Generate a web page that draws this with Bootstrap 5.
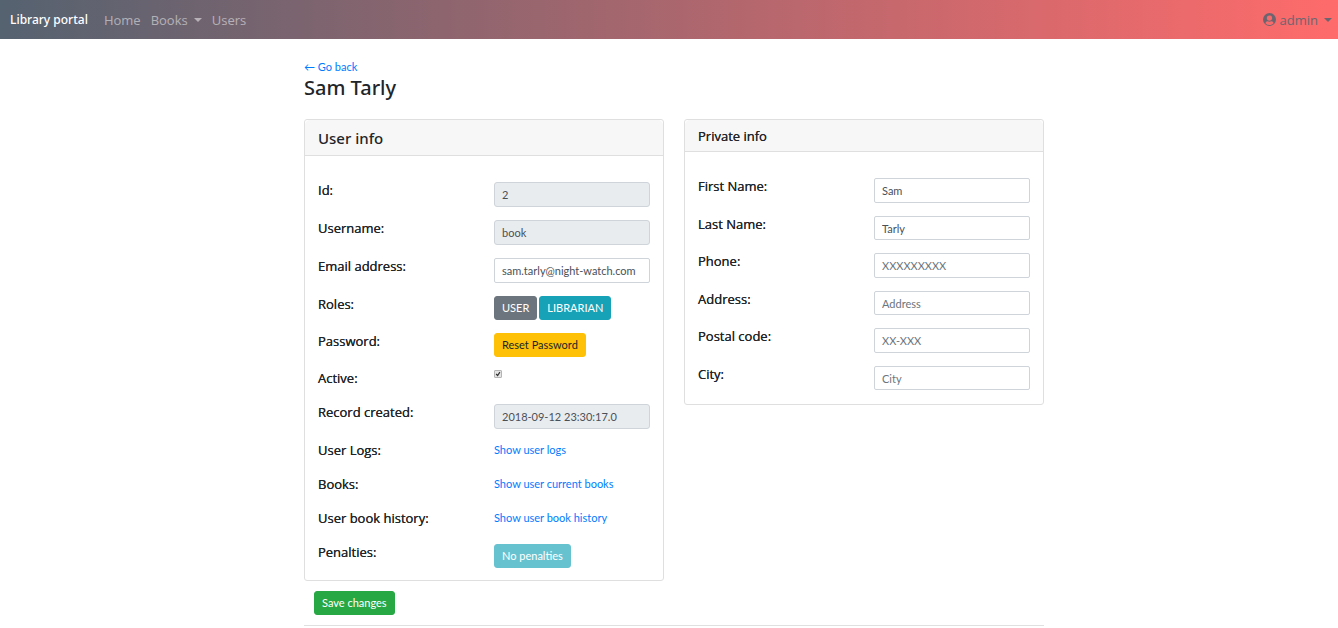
<!DOCTYPE html>
<html lang="en">
<head>
<meta charset="utf-8">
<meta name="viewport" content="width=device-width, initial-scale=1">
<title>Library portal</title>
<link rel="stylesheet" href="https://cdn.jsdelivr.net/npm/bootstrap@5.3.0/dist/css/bootstrap.min.css">
<style>
  body { font-family: "Open Sans", "Noto Sans", sans-serif; font-size: 13px; line-height: 18px; color: #212529; }
  a { color: #007bff; text-decoration: none; }
  .portal-bar { background: linear-gradient(90deg, #556270, #ff6b6b); padding: 0 1px 0 10px; min-height: 39px; --bs-navbar-nav-link-padding-x: 5px; }
  .portal-bar .navbar-brand { font-family: "Noto Sans", sans-serif; font-size: 12px; line-height: 18px; margin-right: 11px; font-weight: 500; color: #fff; }
  .portal-bar .nav-link { color: rgba(255,255,255,.5); padding-top: 10px; padding-bottom: 10px; }
  .portal-bar .account-link { color: #6c6570; }
  .portal-bar .dropdown-toggle::after { margin-left: 6px; vertical-align: 3px; border-top-width: 4px; border-left-width: 4px; border-right-width: 4px; }
  .account-icon { width: 13px; height: 13px; vertical-align: -1px; }
  .portal-main { max-width: 750px; margin: 0 auto; padding: 19px 0 0 10px; }
  .fine { font-family: Lato, sans-serif; font-size: 11px; }
  .page-title { font-family: "Noto Sans", sans-serif; font-size: 20px; line-height: 24px; font-weight: 500; margin-bottom: 19px; }
  .panels { --bs-gutter-x: 20px; }
  .panel { border-color: #dfdfdf; border-radius: 3px; }
  .panel .card-header { padding: 7px 13px 6px; background: #f7f7f7; border-color: #dfdfdf; font-size: 13px; text-shadow: 0 0 0 currentColor; }
  .panel .card-header.wide-head { font-family: "Noto Sans", sans-serif; font-size: 15px; line-height: 22px; font-weight: 500; text-shadow: none; }
  .panel .card-body { padding: 26px 13px 12px; }
  .fields { display: grid; gap: 13px; }
  .fields > .row { --bs-gutter-x: 20px; min-height: 21px; }
  .fields label, .fields .caption { font-size: 13px; line-height: 16px; text-shadow: 0 0 0 currentColor; }
  .fields a { display: block; line-height: 15px; }
  .roles { gap: 2px; }
  .form-control { font-family: Lato, sans-serif; font-size: 11px; line-height: 15px; padding: 4px 7px; height: 25px; min-height: 0; border-radius: 2px; border-color: #ced4da; color: #495057; }
  .form-control::placeholder { color: #6c757d; }
  .form-control:disabled { background: #e9ecef; border-radius: 3px; }
  .panel .private { padding-bottom: 14px; }
  .private > .row:nth-child(even) .form-control { height: 24px; }
  .btn { --bs-btn-font-family: Lato, sans-serif; --bs-btn-font-size: 11px; --bs-btn-line-height: 16px; --bs-btn-padding-y: 3px; --bs-btn-padding-x: 7px; --bs-btn-border-radius: 3px; display: block; }
  .btn-user { --bs-btn-color: #fff; --bs-btn-bg: #6c757d; --bs-btn-border-color: #6c757d; }
  .btn-teal { --bs-btn-color: #fff; --bs-btn-bg: #17a2b8; --bs-btn-border-color: #17a2b8; --bs-btn-disabled-color: #fff; --bs-btn-disabled-bg: #17a2b8; --bs-btn-disabled-border-color: #17a2b8; }
  .btn-amber { --bs-btn-color: #212529; --bs-btn-bg: #ffc107; --bs-btn-border-color: #ffc107; }
  .btn-save { --bs-btn-color: #fff; --bs-btn-bg: #28a745; --bs-btn-border-color: #28a745; margin: 10px 10px; }
  .active-box { display: block; width: 8px; height: 8px; margin: 0; appearance: none; border: 1px solid #b4b4b4; border-radius: 1px; background: #e4e4e4; }
  .active-box:checked { background: #e4e4e4 url("data:image/svg+xml,%3Csvg xmlns='http://www.w3.org/2000/svg' viewBox='0 0 8 8'%3E%3Cpath d='M1.5 4l2 2 3-4.500' fill='none' stroke='%23333' stroke-width='1.600'/%3E%3C/svg%3E") center / 100%; }
  .end-rule { margin: 0; border-color: #000; opacity: .12; }
</style>
</head>
<body>
<nav class="navbar navbar-expand portal-bar">
  <a class="navbar-brand p-0" href="#">Library portal</a>
  <ul class="navbar-nav me-auto">
    <li class="nav-item"><a class="nav-link" href="#">Home</a></li>
    <li class="nav-item dropdown"><a class="nav-link dropdown-toggle" href="#" role="button" data-bs-toggle="dropdown">Books</a></li>
    <li class="nav-item"><a class="nav-link" href="#">Users</a></li>
  </ul>
  <ul class="navbar-nav">
    <li class="nav-item dropdown"><a class="nav-link dropdown-toggle account-link" href="#" role="button" data-bs-toggle="dropdown"><svg class="account-icon" viewBox="0 0 16 16" aria-hidden="true"><path fill="currentColor" fill-rule="evenodd" d="M8 0a8 8 0 1 1 0 16A8 8 0 0 1 8 0ZM8 3a3.300 3.300 0 1 0 0 6.600A3.300 3.300 0 0 0 8 3ZM3 12.500a6.500 6.500 0 0 0 10 0C12.500 10.800 11.500 10.200 10.300 10.200a5 5 0 0 1-4.600 0C4.500 10.200 3.500 10.800 3 12.500Z"/></svg> admin</a></li>
  </ul>
</nav>

<main class="portal-main">
  <a class="fine d-block" href="#">← Go back</a>
  <h1 class="page-title">Sam Tarly</h1>
  <form>
    <div class="row panels align-items-start">
      <div class="col-6">
        <section class="card panel">
          <div class="card-header wide-head">User info</div>
          <div class="card-body fields">
            <div class="row"><label class="col-6" for="uid">Id:</label><div class="col-6"><input class="form-control" id="uid" value="2" disabled></div></div>
            <div class="row"><label class="col-6" for="uname">Username:</label><div class="col-6"><input class="form-control" id="uname" value="book" disabled></div></div>
            <div class="row"><label class="col-6" for="email">Email address:</label><div class="col-6"><input class="form-control" id="email" type="email" value="sam.tarly@night-watch.com"></div></div>
            <div class="row"><div class="col-6 caption">Roles:</div><div class="col-6 d-flex roles"><button type="button" class="btn btn-user">USER</button><button type="button" class="btn btn-teal">LIBRARIAN</button></div></div>
            <div class="row"><div class="col-6 caption">Password:</div><div class="col-6"><button type="button" class="btn btn-amber">Reset Password</button></div></div>
            <div class="row"><label class="col-6" for="active">Active:</label><div class="col-6"><input class="active-box" id="active" type="checkbox" checked></div></div>
            <div class="row"><label class="col-6" for="created">Record created:</label><div class="col-6"><input class="form-control" id="created" value="2018-09-12 23:30:17.0" disabled></div></div>
            <div class="row"><div class="col-6 caption">User Logs:</div><div class="col-6"><a class="fine" href="#">Show user logs</a></div></div>
            <div class="row"><div class="col-6 caption">Books:</div><div class="col-6"><a class="fine" href="#">Show user current books</a></div></div>
            <div class="row"><div class="col-6 caption">User book history:</div><div class="col-6"><a class="fine" href="#">Show user book history</a></div></div>
            <div class="row"><div class="col-6 caption">Penalties:</div><div class="col-6"><button type="button" class="btn btn-teal" disabled>No penalties</button></div></div>
          </div>
        </section>
      </div>
      <div class="col-6">
        <section class="card panel">
          <div class="card-header">Private info</div>
          <div class="card-body fields private">
            <div class="row"><label class="col-6" for="first">First Name:</label><div class="col-6"><input class="form-control" id="first" value="Sam"></div></div>
            <div class="row"><label class="col-6" for="last">Last Name:</label><div class="col-6"><input class="form-control" id="last" value="Tarly"></div></div>
            <div class="row"><label class="col-6" for="phone">Phone:</label><div class="col-6"><input class="form-control" id="phone" placeholder="XXXXXXXXX"></div></div>
            <div class="row"><label class="col-6" for="address">Address:</label><div class="col-6"><input class="form-control" id="address" placeholder="Address"></div></div>
            <div class="row"><label class="col-6" for="postal">Postal code:</label><div class="col-6"><input class="form-control" id="postal" placeholder="XX-XXX"></div></div>
            <div class="row"><label class="col-6" for="city">City:</label><div class="col-6"><input class="form-control" id="city" placeholder="City"></div></div>
          </div>
        </section>
      </div>
    </div>
    <button type="submit" class="btn btn-save">Save changes</button>
  </form>
  <hr class="end-rule">
</main>
<script src="https://cdn.jsdelivr.net/npm/bootstrap@5.3.0/dist/js/bootstrap.bundle.min.js"></script>
</body>
</html>
